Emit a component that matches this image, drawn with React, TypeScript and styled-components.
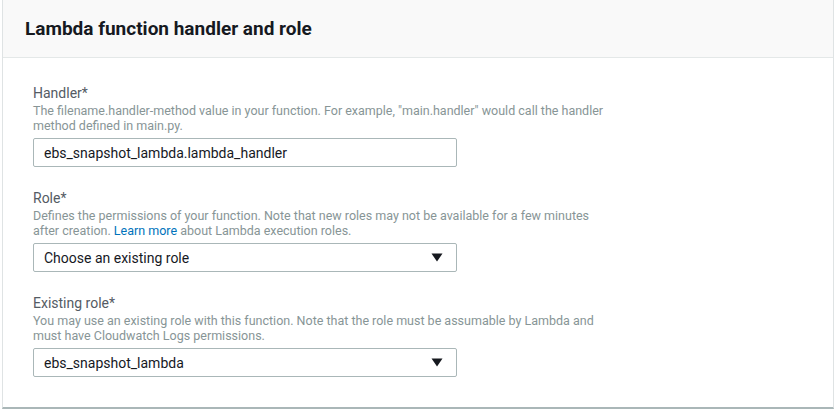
import * as React from 'react';
import styled, { createGlobalStyle } from 'styled-components';

const GlobalStyle = createGlobalStyle`
    html, body {
        margin: 0;
        padding: 0;
        background: #ffffff;
    }
    body {
        font-family: Roboto, 'Liberation Sans', sans-serif;
        color: #16191f;
    }
`;

interface FieldProps {
    label: string;
    children: React.ReactNode;
    description: React.ReactNode;
}

const Field: React.FC<FieldProps> = (props) => {
    return (
        <FieldBlock>
            <Label>{props.label}</Label>
            <Description>{props.description}</Description>
            {props.children}
        </FieldBlock>
    );
};

const SelectBox: React.FC<{ value: string }> = ({ value }) => (
    <Box>
        <BoxText>{value}</BoxText>
        <Caret viewBox='0 0 12 9'>
            <path d='M0.5 0.5 L11.5 0.5 L6 8.5 Z' fill='#16191f' />
        </Caret>
    </Box>
);

const App: React.FC = () => {
    return (
        <>
            <GlobalStyle />
            <Panel>
                <Header>
                    <Title>Lambda function handler and role</Title>
                </Header>
                <Body>
                    <Field
                        label='Handler*'
                        description={
                            <>
                                The filename.handler-method value in your function. For example, "main.handler" would call the handler
                                <br />
                                method defined in main.py.
                            </>
                        }
                    >
                        <Box>
                            <BoxText>ebs_snapshot_lambda.lambda_handler</BoxText>
                        </Box>
                    </Field>
                    <Field
                        label='Role*'
                        description={
                            <>
                                Defines the permissions of your function. Note that new roles may not be available for a few minutes
                                <br />
                                after creation. <Link>Learn more</Link> about Lambda execution roles.
                            </>
                        }
                    >
                        <SelectBox value='Choose an existing role' />
                    </Field>
                    <Field
                        label='Existing role*'
                        description={
                            <>
                                You may use an existing role with this function. Note that the role must be assumable by Lambda and
                                <br />
                                must have Cloudwatch Logs permissions.
                            </>
                        }
                    >
                        <SelectBox value='ebs_snapshot_lambda' />
                    </Field>
                </Body>
            </Panel>
        </>
    );
};

const Panel = styled.div`
    margin-left: 2px;
    width: 830px;
    border-left: 1px solid #dfe3e4;
    border-right: 1px solid #dfe3e4;
    border-bottom: 2px solid #aab7b8;
    background: #ffffff;
`;

const Header = styled.div`
    height: 57px;
    background: #f9f9f9;
    border-bottom: 1px solid #e4e8e8;
    display: flex;
    align-items: center;
    padding-left: 22px;
`;

const Title = styled.h2`
    margin: 0;
    font-size: 19px;
    font-weight: 700;
    color: #16191f;
`;

const Body = styled.div`
    padding: 25px 0 30px 30px;
    display: flex;
    flex-direction: column;
    gap: 21px;
`;

const FieldBlock = styled.div`
    display: flex;
    flex-direction: column;
`;

const Label = styled.div`
    font-size: 14px;
    line-height: 20px;
    color: #545b64;
`;

const Description = styled.div`
    font-size: 12.5px;
    line-height: 15px;
    color: #879596;
    margin-bottom: 5px;
`;

const Link = styled.span`
    color: #0073bb;
`;

const Box = styled.div`
    box-sizing: border-box;
    width: 424px;
    height: 29px;
    border: 1px solid #aab7b8;
    border-radius: 2px;
    display: flex;
    align-items: center;
    justify-content: space-between;
    padding: 0 13px 0 10px;
    background: #ffffff;
`;

const BoxText = styled.span`
    font-size: 14px;
    color: #16191f;
`;

const Caret = styled.svg`
    width: 12px;
    height: 9px;
`;

export default App;
